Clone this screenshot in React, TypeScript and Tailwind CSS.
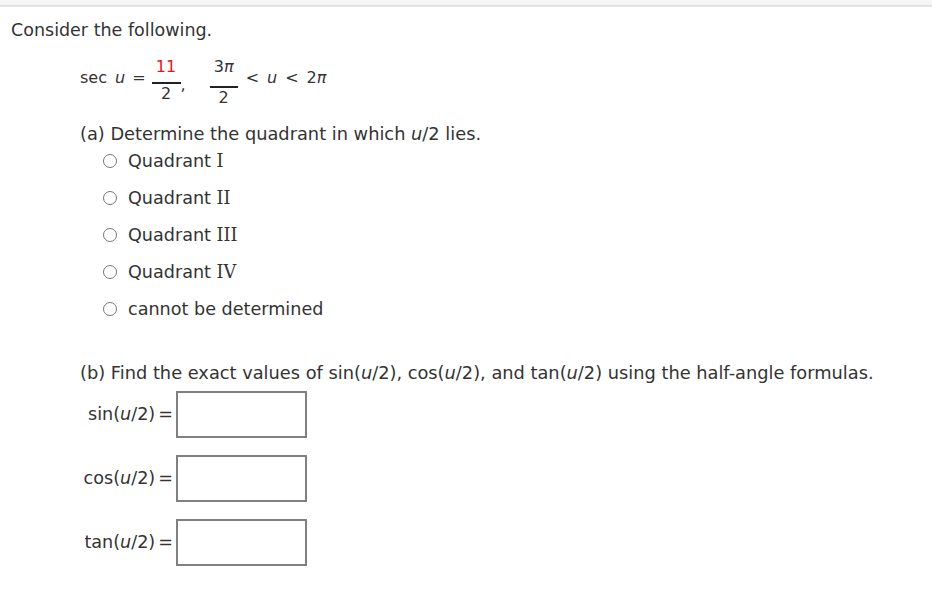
import React from 'react';

const font = { fontFamily: '"DejaVu Sans", Verdana, sans-serif' };

function Frac({
  num,
  den,
  red,
  className,
  barGap,
}: {
  num: React.ReactNode;
  den: React.ReactNode;
  red?: boolean;
  className?: string;
  barGap: string;
}) {
  return (
    <span className={'inline-flex flex-col items-center ' + (className ?? '')}>
      <span className={'leading-[18px] ' + (red ? 'text-[#e8141b]' : '')}>{num}</span>
      <span className={'self-stretch h-[2px] bg-[#222] ' + barGap} />
      <span className="leading-[18px] mt-[1px]">{den}</span>
    </span>
  );
}

const options: React.ReactNode[] = [
  <>Quadrant <span className="font-['DejaVu_Serif']">I</span></>,
  <>Quadrant <span className="font-['DejaVu_Serif']">II</span></>,
  <>Quadrant <span className="font-['DejaVu_Serif']">III</span></>,
  <>Quadrant <span className="font-['DejaVu_Serif']">IV</span></>,
  'cannot be determined',
];

function AnswerRow({ label, className }: { label: string; className?: string }) {
  return (
    <div className={'flex items-center ' + (className ?? '')}>
      <div className="w-[176px] text-right pr-[3px] text-[17.6px] text-[#333] whitespace-nowrap">
        {label}(<i>u</i>/2)<span className="ml-[3px]">=</span>
      </div>
      <div className="w-[131px] h-[47px] border-2 border-[#808080] bg-white" />
    </div>
  );
}

export default function App() {
  return (
    <div className="w-[932px] h-[592px] bg-white text-[#333] overflow-hidden" style={font}>
      <div className="h-[7px] bg-[#f5f5f5] border-b-2 border-[#e2e2e2]" />

      <div className="pl-[11px] mt-[11px] text-[17.5px] leading-[24px]">Consider the following.</div>

      <div className="flex items-start pl-[80px] mt-[12px] text-[16px] h-[58px]">
        <span className="leading-[18px] mt-[15px] whitespace-nowrap flex">
          <span>sec</span>
          <i className="ml-[8px]">u</i>
          <span className="ml-[7px]">=</span>
        </span>
        <Frac num="11" den="2" red className="ml-[6px] mt-[4px] w-[29px]" barGap="mt-[6px]" />
        <span className="mt-[22px] leading-[18px]">,</span>
        <Frac num={<>3<i>π</i></>} den="2" className="ml-[24px] mt-[4px] w-[28px]" barGap="mt-[10px]" />
        <span className="ml-[8px] mt-[15px] leading-[18px] whitespace-nowrap flex">
          <span>&lt;</span>
          <i className="ml-[8px]">u</i>
          <span className="ml-[8px]">&lt;</span>
          <span className="ml-[8px]">
            2<i>π</i>
          </span>
        </span>
      </div>

      <div className="pl-[80px] mt-[10px] text-[17.8px] leading-[24px]">
        (a) Determine the quadrant in which <i>u</i>/2 lies.
      </div>

      <div className="pl-[103px] flex flex-col">
        {options.map((o, i) => (
          <div key={i} className={'flex items-center h-[24px] ' + (i === 0 ? 'mt-[3px]' : 'mt-[13px]')}>
            <span className="w-[14px] h-[14px] rounded-full border border-[#777] bg-white" />
            <span className="ml-[11px] text-[17.6px] leading-[24px]">{o}</span>
          </div>
        ))}
      </div>

      <div className="pl-[80px] mt-[40px] text-[17.8px] leading-[24px] whitespace-nowrap">
        (b) Find the exact values of sin(<i>u</i>/2), cos(<i>u</i>/2), and tan(<i>u</i>/2) using the half-angle formulas.
      </div>

      <AnswerRow label="sin" className="mt-[6px]" />
      <AnswerRow label="cos" className="mt-[17px]" />
      <AnswerRow label="tan" className="mt-[17px]" />
    </div>
  );
}
